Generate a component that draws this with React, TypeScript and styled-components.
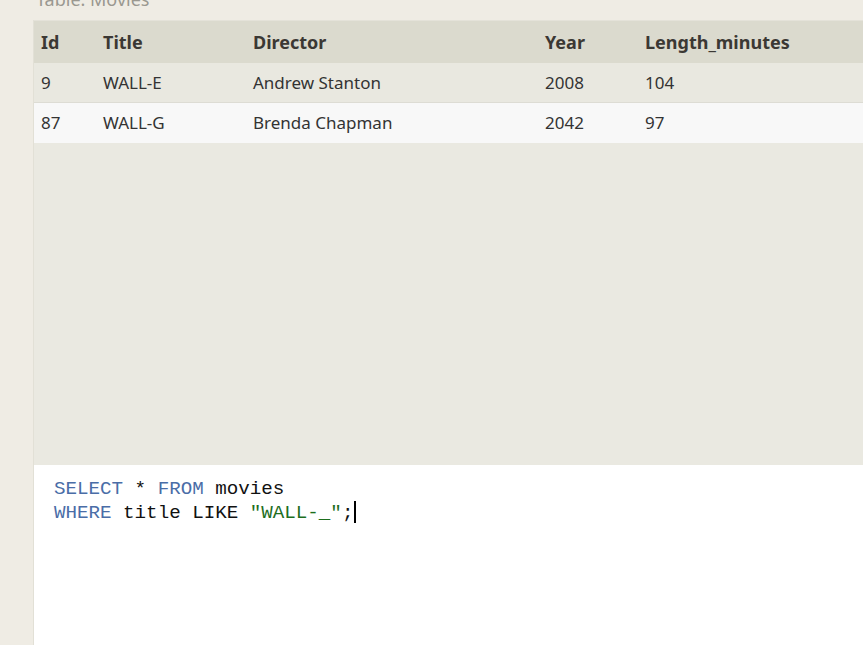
import React from "react";
import styled, { createGlobalStyle } from "styled-components";

const GlobalStyle = createGlobalStyle`
  html, body {
    margin: 0;
    padding: 0;
    background: #efece4;
    overflow: hidden;
  }
  body {
    font-family: "Noto Sans", "Open Sans", sans-serif;
  }
`;

const Page = styled.div`
  width: 863px;
  height: 645px;
  display: flex;
  flex-direction: column;
  overflow: hidden;
`;

// caption sits mostly above the viewport, as in a scrolled page
const Caption = styled.div`
  height: 21px;
  margin-top: -1px;
  padding-left: 36px;
  font-size: 18px;
  line-height: 0;
  color: #9a9890;
  flex-shrink: 0;
`;

const Panel = styled.div`
  margin-left: 33px;
  flex: 1;
  display: flex;
  flex-direction: column;
  border-left: 1px solid #e2e0d6;
`;

const TableArea = styled.div`
  height: 445px;
  flex-shrink: 0;
  background: #eae9e1;
`;

const Table = styled.table`
  width: 100%;
  table-layout: fixed;
  border-collapse: collapse;
  font-size: 17px;
  color: #333;
`;

const HeadCell = styled.th<{ $w?: number }>`
  box-sizing: border-box;
  width: ${(p) => (p.$w ? `${p.$w}px` : "auto")};
  text-align: left;
  font-weight: 700;
  font-size: 18px;
  color: #3b3834;
  background: #dbdace;
  height: 42px;
  padding: 0 0 0 7px;
  border-top: 1px solid #e4e2d9;
`;

const Row = styled.tr<{ $alt?: boolean }>`
  background: ${(p) => (p.$alt ? "#f8f8f8" : "#e9e8e0")};
  border-bottom: 1px solid ${(p) => (p.$alt ? "#f8f8f8" : "#dddcd4")};
`;

const Cell = styled.td`
  height: 39px;
  padding: 0 0 0 7px;
  font-weight: 400;
`;

const Editor = styled.div`
  flex: 1;
  background: #fff;
  padding: 12px 0 0 20px;
  font-family: "Liberation Mono", "DejaVu Sans Mono", monospace;
  font-size: 19.2px;
  line-height: 24px;
  color: #111;
`;

const Line = styled.div`
  white-space: pre;
`;

const Keyword = styled.span`
  color: #4a6da7;
`;

const Str = styled.span`
  color: #1d6e1d;
`;

const Caret = styled.span`
  display: inline-block;
  width: 2px;
  height: 22px;
  background: #000;
  vertical-align: -5px;
  margin-left: 1px;
`;

const movies = [
  { id: 9, title: "WALL-E", director: "Andrew Stanton", year: 2008, length: 104 },
  { id: 87, title: "WALL-G", director: "Brenda Chapman", year: 2042, length: 97 },
];

export default function App() {
  return (
    <Page>
      <GlobalStyle />
      <Caption>Table: Movies</Caption>
      <Panel>
        <TableArea>
          <Table>
            <thead>
              <tr>
                <HeadCell $w={62}>Id</HeadCell>
                <HeadCell $w={150}>Title</HeadCell>
                <HeadCell $w={292}>Director</HeadCell>
                <HeadCell $w={100}>Year</HeadCell>
                <HeadCell>Length_minutes</HeadCell>
              </tr>
            </thead>
            <tbody>
              {movies.map((m, i) => (
                <Row key={m.id} $alt={i % 2 === 1}>
                  <Cell>{m.id}</Cell>
                  <Cell>{m.title}</Cell>
                  <Cell>{m.director}</Cell>
                  <Cell>{m.year}</Cell>
                  <Cell>{m.length}</Cell>
                </Row>
              ))}
            </tbody>
          </Table>
        </TableArea>
        <Editor>
          <Line>
            <Keyword>SELECT</Keyword> * <Keyword>FROM</Keyword> movies
          </Line>
          <Line>
            <Keyword>WHERE</Keyword> title LIKE <Str>"WALL-_"</Str>;<Caret />
          </Line>
        </Editor>
      </Panel>
    </Page>
  );
}
